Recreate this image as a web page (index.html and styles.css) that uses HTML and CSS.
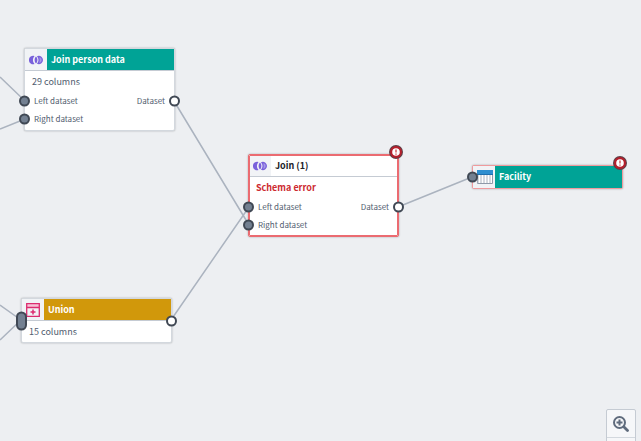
FILE: index.html
```html
<!DOCTYPE html>
<html lang="en">
<head>
<meta charset="utf-8">
<title>Pipeline graph</title>
<link rel="stylesheet" href="styles.css">
</head>
<body>
<svg class="defs" aria-hidden="true">
  <symbol id="join" viewBox="0 0 14 10">
    <path d="M5.500 .900A4.300 4.300 0 1 0 5.500 9.100 6 6 0 0 1 5.500 .900z" fill="#7961db"/>
    <path d="M7 1.500a5 5 0 0 1 0 7 5 5 0 0 1 0-7z" fill="#7961db"/>
    <path d="M9 1.600a3.500 3.500 0 1 1 0 6.800 6 6 0 0 0 0-6.800z" fill="#a698e8" stroke="#7961db" stroke-width="1.300"/>
  </symbol>
  <symbol id="alert" viewBox="0 0 14 14">
    <circle cx="7" cy="7" r="7" fill="#5c4048"/>
    <circle cx="7" cy="7" r="6" fill="#b51f2c"/>
    <circle cx="7" cy="7" r="3.800" fill="#fff"/>
    <path d="M7 4.500v3M7 8.500v1.200" stroke="#cd4246" stroke-width="1.300"/>
  </symbol>
</svg>
<main class="canvas">
  <svg class="edges" aria-hidden="true">
    <path d="M0 77L25 101M0 129L25 119M174 101L249 225M171 320L249 207M398 207L472 177M0 305L21 320M0 340L21 320"/>
  </svg>

  <article class="node node-person">
    <header class="head teal">
      <span class="icon"><svg class="join"><use href="#join"/></svg></span>
      <h2 class="title">Join person data</h2>
    </header>
    <p class="summary">29 columns</p>
    <div class="row"><i class="port in"></i><span>Left dataset</span><span>Dataset</span><i class="port out"></i></div>
    <div class="row"><i class="port in"></i><span>Right dataset</span></div>
  </article>

  <article class="node node-join failed">
    <header class="head plain">
      <span class="icon"><svg class="join"><use href="#join"/></svg></span>
      <h2 class="title">Join (1)</h2>
    </header>
    <p class="summary error">Schema error</p>
    <div class="row"><i class="port in"></i><span>Left dataset</span><span>Dataset</span><i class="port out"></i></div>
    <div class="row"><i class="port in"></i><span>Right dataset</span></div>
    <svg class="alert" role="img" aria-label="Error"><use href="#alert"/></svg>
  </article>

  <article class="node node-facility compact invalid">
    <header class="head teal">
      <span class="icon">
        <svg class="table" viewBox="0 0 16 14">
          <path d="M.5.500h15v13H.5z" fill="#fff" stroke="#8f99a8"/>
          <path d="M1 5v8M4 5v8M7 5v8M10 5v8M13 5v8" stroke="#abb3bf"/>
          <path d="M0 0h16v5H0z" fill="#2f8fd0"/>
          <path d="M0 4h16v1H0z" fill="#1f6fae"/>
        </svg>
      </span>
      <h2 class="title">Facility</h2>
    </header>
    <i class="port in"></i>
    <svg class="alert" role="img" aria-label="Error"><use href="#alert"/></svg>
  </article>

  <article class="node node-union compact">
    <header class="head gold">
      <span class="icon">
        <svg class="union" viewBox="0 0 14 14" fill="none" stroke="#db2c6f">
          <path d="M1 1h12v3H1z" fill="#f6c3d7" stroke="none"/>
          <path d="M.7.700h12.600v12.600H.7zM1 4.500h12" stroke-width="1.300"/>
          <path d="M7 6.500v5M4.500 9h5" stroke-width="1.500"/>
        </svg>
      </span>
      <h2 class="title">Union</h2>
    </header>
    <p class="summary">15 columns</p>
    <i class="port in multi"></i>
    <i class="port out"></i>
  </article>

  <nav class="zoom" aria-label="Zoom">
    <button type="button" aria-label="Zoom in">
      <svg viewBox="0 0 16 16" fill="none" stroke="#5f6b7c">
        <circle cx="6.500" cy="6.500" r="5.500" stroke-width="2"/>
        <path d="M6.500 3.500v6M3.500 6.500h6" stroke-width="2"/>
        <path d="M11 11l3.500 3.500" stroke-width="2.800" stroke-linecap="round"/>
      </svg>
    </button>
    <button type="button" aria-label="Zoom out"></button>
  </nav>
</main>
</body>
</html>
```
FILE: styles.css
```css
* { box-sizing: border-box; }
body {
  margin: 0;
  background: #edeff2;
  color: #505c6e;
  font-family: "Noto Sans CJK JP", "Noto Sans", sans-serif;
}
h2, p { margin: 0; }
.defs { position: absolute; width: 0; height: 0; }
.canvas { position: relative; height: 100vh; overflow: hidden; }
.edges { position: absolute; width: 100%; height: 100%; fill: none; stroke: #abb3bf; stroke-width: 1.5px; }

/* Nodes sit at their graph coordinates */
.node {
  position: absolute;
  width: 151px;
  padding-bottom: 2px;
  background: #fff;
  border: 1px solid #d3d8de;
  border-radius: 2px;
  box-shadow: 0 0 2px #11141855;
}
.node-person { left: 24px; top: 48px; }
.node-join { left: 248px; top: 154px; }
.node-facility { left: 472px; top: 165px; }
.node-union { left: 21px; top: 298px; }
.compact { padding-bottom: 0; }
.failed { border-color: #eb6b71; outline: 1px solid #eb6b71; outline-offset: -2px; }
.invalid { border-color: #f09a9d; }

.head { display: flex; height: 22px; border-bottom: 1px solid #c5cbd3; }
.compact.invalid .head { border-bottom: 0; }
.icon { display: flex; flex: none; align-items: center; justify-content: center; width: 22px; background: #f1f3f6; }
.title { flex: 1; padding-left: 4px; font-size: 9px; line-height: 21px; font-weight: 700; color: #fff; white-space: nowrap; }
.teal .title { background: #00a396; }
.gold .title { background: #d1980b; }
.plain .title { color: #1c2127; }
.join { width: 14px; height: 10px; }
.table { width: 16px; height: 14px; margin-left: 2px; }
.union { width: 14px; height: 14px; }

.summary { padding: 0 7px; font-size: 9px; line-height: 21px; }
.error { color: #cd2b31; font-weight: 700; }
.row { position: relative; display: flex; justify-content: space-between; padding: 0 9px; font-size: 8px; line-height: 18px; }

.port {
  position: absolute;
  top: 50%;
  width: 11px;
  height: 11px;
  border: 2px solid #404854;
  border-radius: 6px;
  transform: translateY(-50%);
}
.in { left: -6px; background: #738091; }
.out { right: -6px; background: #fff; }
.multi { height: 19px; }
.alert { position: absolute; top: -10px; right: -5px; width: 14px; height: 14px; }

.zoom { position: absolute; right: 5px; top: 409px; width: 30px; border: 1px solid #c5cbd3; border-radius: 2px; background: #f6f7f9; }
.zoom button { display: flex; align-items: center; justify-content: center; width: 100%; height: 28px; padding: 0; border: 0; border-bottom: 1px solid #d3d8de; background: none; }
.zoom svg { width: 16px; height: 16px; }
```
